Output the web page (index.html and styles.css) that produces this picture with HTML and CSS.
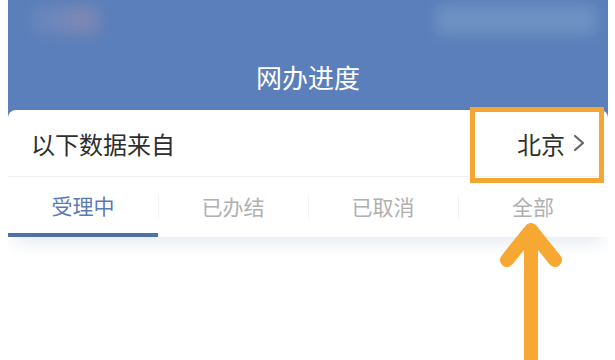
FILE: index.html
```html
<!DOCTYPE html>
<html lang="zh">
<head>
<meta charset="utf-8">
<link rel="stylesheet" href="styles.css">
</head>
<body>
<div class="page">
  <header class="header">
    <div class="status">
      <div class="blob blob-left"></div>
      <div class="blob blob-right"></div>
    </div>
    <h1 class="title">网办进度</h1>
  </header>
  <section class="card">
    <div class="source-row">
      <span class="source-label">以下数据来自</span>
      <span class="city">北京
        <svg class="chev" width="12" height="20" viewBox="0 0 12 20"><polyline points="2,3 10,10 2,17" fill="none" stroke="#666666" stroke-width="2.2" stroke-linecap="round" stroke-linejoin="round"/></svg>
      </span>
      <div class="highlight"></div>
    </div>
    <nav class="tabs">
      <div class="tab active">受理中</div>
      <div class="tab">已办结</div>
      <div class="tab">已取消</div>
      <div class="tab">全部</div>
    </nav>
    <div class="content">
      <svg class="arrow" width="80" height="150" viewBox="0 0 80 150">
        <path d="M36 14 L36 160 M12 42 L36 12 L60 42" fill="none" stroke="#f6a832" stroke-width="14" stroke-linecap="round" stroke-linejoin="round"/>
      </svg>
    </div>
  </section>
</div>
</body>
</html>
```
FILE: styles.css
```css
html, body {
  margin: 0;
  padding: 0;
  background: #ffffff;
}
body {
  font-family: "Noto Sans CJK SC", "Noto Sans", sans-serif;
  overflow: hidden;
  height: 360px;
}
.page {
  margin: 0 7px 0 8px;
  height: 360px;
  overflow: hidden;
}
.header {
  background: #5b7fba;
  height: 120px;
  display: flex;
  flex-direction: column;
}
.status {
  display: flex;
  justify-content: space-between;
  padding: 6px 12px 0 22px;
  height: 30px;
}
.blob {
  height: 28px;
  filter: blur(7px);
}
.blob-left {
  width: 72px;
  background: linear-gradient(90deg, #6485bd 0%, #6f87bb 40%, #8088b3 75%, #6a84b8 100%);
}
.blob-right {
  width: 160px;
  background: #6e92c4;
}
.title {
  margin: 25px 0 0;
  text-align: center;
  color: #ffffff;
  font-weight: 400;
  font-size: 26px;
  line-height: 32px;
}
.card {
  background: #ffffff;
  border-radius: 8px 8px 0 0;
  margin-top: -10px;
  position: relative;
}
.source-row {
  position: relative;
  display: flex;
  justify-content: space-between;
  align-items: center;
  height: 66px;
  padding: 0 23px 0 23px;
  border-bottom: 1px solid #f1f1f1;
}
.source-label {
  font-size: 24px;
  color: #2e2e2e;
}
.city {
  display: flex;
  align-items: center;
  gap: 8px;
  font-size: 24px;
  color: #2e2e2e;
}
.highlight {
  position: absolute;
  left: 462px;
  top: -3px;
  width: 124px;
  height: 66px;
  border: 5px solid #f5a532;
}
.tabs {
  display: grid;
  grid-template-columns: repeat(4, 1fr);
  height: 60px;
  box-shadow: 0 12px 18px -6px rgba(220, 228, 236, 0.75);
  position: relative;
}
.tab {
  display: flex;
  align-items: center;
  justify-content: center;
  font-size: 21px;
  color: #b0b0b0;
  padding-bottom: 2px;
  position: relative;
}
.tab + .tab::before {
  content: "";
  position: absolute;
  left: 0;
  top: 18px;
  height: 24px;
  border-left: 1px solid #f3f3f3;
}
.tab.active {
  color: #5a7cb3;
  border-bottom: 4px solid #4f71a8;
  padding-bottom: 0;
}
.content {
  height: 130px;
  position: relative;
}
.arrow {
  position: absolute;
  left: 487px;
  top: -19px;
}
```
